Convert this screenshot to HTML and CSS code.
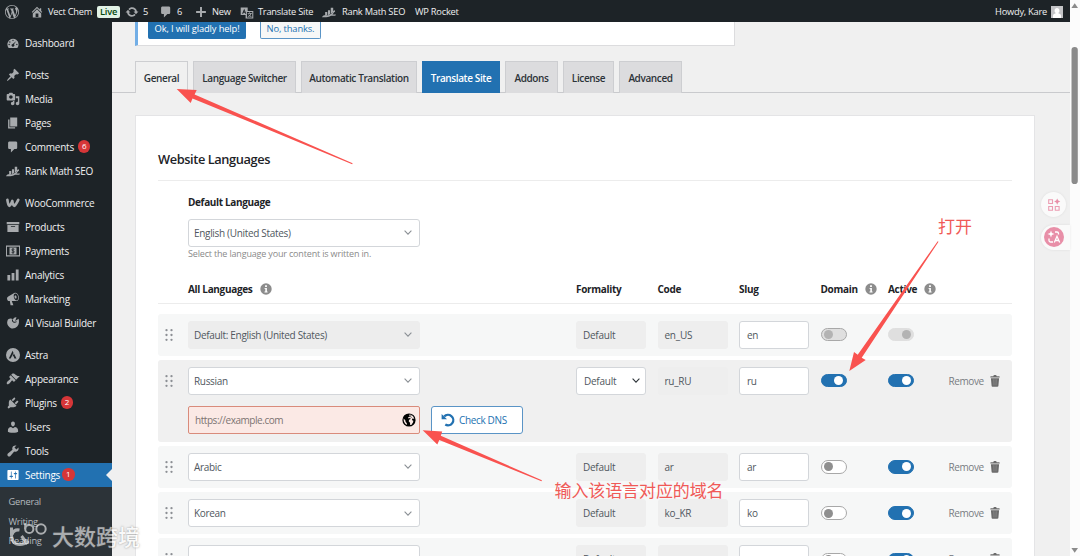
FILE: index.html
```html
<!DOCTYPE html>
<html lang="en">
<head>
  <meta charset="UTF-8">
  <title>Translate Settings</title>
  <link rel="stylesheet" href="styles.css">
</head>
<body>

  <!-- icon definitions -->
  <svg class="defs" width="0" height="0">
    <symbol id="i-wp" viewBox="0 0 20 20"><path d="M20 10c0-5.51-4.49-10-10-10C4.48 0 0 4.49 0 10c0 5.52 4.48 10 10 10 5.51 0 10-4.48 10-10zM7.78 15.37L4.37 6.22c.55-.02 1.17-.08 1.17-.08.5-.06.44-1.13-.06-1.11 0 0-1.45.11-2.37.11-.18 0-.37 0-.58-.01C4.12 2.69 6.87 1.11 10 1.11c2.33 0 4.45.87 6.05 2.34-.68-.11-1.65.39-1.65 1.58 0 .74.45 1.36.9 2.1.35.61.55 1.36.55 2.46 0 1.49-1.4 5-1.4 5l-3.03-8.37c.54-.02.82-.17.82-.17.5-.05.44-1.25-.06-1.22 0 0-1.44.12-2.38.12-.87 0-2.33-.12-2.33-.12-.5-.03-.56 1.2-.06 1.22l.92.08 1.26 3.41zM17.41 10c.24-.64.74-1.87.43-4.25.7 1.29 1.05 2.71 1.05 4.25 0 3.29-1.73 6.24-4.4 7.78.97-2.59 1.94-5.2 2.92-7.78zM6.1 18.09C3.12 16.65 1.11 13.53 1.11 10c0-1.3.23-2.48.72-3.59C3.25 10.3 4.67 14.2 6.1 18.09zm4.03-6.63l2.58 6.98c-.86.29-1.76.45-2.71.45-.79 0-1.57-.11-2.29-.33.81-2.38 1.62-4.74 2.42-7.1z"/></symbol>
    <symbol id="i-home" viewBox="0 0 20 20"><path d="M16 8.5l1.53 1.53-1.06 1.06L10 4.6l-6.47 6.49-1.06-1.06L10 2.5l4 4v-2h2v4zm-6-2.46l6 5.99V18H4v-5.97zM12 17v-5H8v5h4z"/></symbol>
    <symbol id="i-update" viewBox="0 0 20 20"><path d="M10.2 3.28c3.53 0 6.43 2.61 6.92 6h2.08l-3.5 4-3.5-4h2.32c-.45-1.97-2.21-3.45-4.32-3.45-1.45 0-2.73.71-3.54 1.78L4.95 5.66C6.23 4.2 8.11 3.28 10.2 3.28zm-.4 13.44c-3.52 0-6.43-2.61-6.92-6H.8l3.5-4c1.17 1.33 2.33 2.67 3.5 4H5.48c.45 1.97 2.21 3.45 4.32 3.45 1.45 0 2.73-.71 3.54-1.78l1.71 1.95c-1.28 1.46-3.15 2.38-5.25 2.38z"/></symbol>
    <symbol id="i-comment" viewBox="0 0 20 20"><path d="M5 2h9c1.1 0 2 .9 2 2v7c0 1.1-.9 2-2 2h-2l-5 5v-5H5c-1.1 0-2-.9-2-2V4c0-1.1.9-2 2-2z"/></symbol>
    <symbol id="i-plus" viewBox="0 0 20 20"><path d="M17 8.6v2.8h-5.6V17H8.6v-5.6H3V8.6h5.6V3h2.8v5.6z"/></symbol>
    <symbol id="i-translate" viewBox="0 0 20 20"><path fill-rule="evenodd" d="M1 2h10v5h8v11H8v-5H1zM3 11l3-7 3 7H7.5l-.5-1.5H5L4.5 11zM5.500 8h1L6 6.500zM10 8.500v8h7.500v-8z"/><path d="M11 10h2.200V9h1v1H17v1h-1c-.3 1.300-.8 2.100-1.400 2.800.6.5 1.300.9 2.100 1.200l-.5 1c-.9-.4-1.700-.9-2.400-1.500-.7.600-1.400 1.100-2.300 1.500l-.5-1c.8-.3 1.500-.7 2-1.200-.5-.5-.9-1.100-1.200-1.800h1.100c.2.400.5.700.8 1.100.5-.6.9-1.200 1.100-2.100H11z"/></symbol>
    <symbol id="i-rank" viewBox="0 0 20 20"><path d="M4.500 10h3v4.500l-3 1.500zM8.500 7.500h3v5.500l-3 1.500zM12.500 4h3.500v6l-3.500 3z"/><path d="M0 17.500c1.500-2.500 3-3.300 5.500-2.500 5-.5 8.500-2.500 10.500-5.500h-1.500L18 7l.8 3.500-1.300-.5c-.7 1.500-1.500 2.500-2.500 3.500h5l-1 1.700h-6C9.500 17 6 18 0 17.500z"/></symbol>
    <symbol id="i-dash" viewBox="0 0 20 20"><path fill-rule="evenodd" d="M3.760 17h12.480A8 8 0 0 0 18 12a8 8 0 1 0-14.240 5zM10 5.200a1 1 0 1 1 0 2 1 1 0 0 1 0-2zM5.500 7.500a1 1 0 1 1 0 2 1 1 0 0 1 0-2zM4.500 11.200a1 1 0 1 1 0 2 1 1 0 0 1 0-2zM15.500 11.200a1 1 0 1 1 0 2 1 1 0 0 1 0-2zM14.800 7l-3.400 4.900a2 2 0 1 1-1.800-.6z"/></symbol>
    <symbol id="i-pin" viewBox="0 0 20 20"><path d="M10.440 3.020l1.820-1.820 6.360 6.350-1.830 1.820c-1.050-.68-2.480-.57-3.410.36l-.75.75c-.92.93-1.040 2.350-.35 3.410l-1.830 1.820-2.410-2.410-2.800 2.790c-.42.42-3.380 2.710-3.800 2.290s1.860-3.390 2.280-3.810l2.790-2.790L4.100 9.360l1.830-1.820c1.050.69 2.480.57 3.400-.36l.75-.75c.93-.92 1.050-2.350.36-3.410z"/></symbol>
    <symbol id="i-media" viewBox="0 0 20 20"><path d="M13 11V4c0-.55-.45-1-1-1h-1.670L9 1H5L3.670 3H2c-.55 0-1 .45-1 1v7c0 .55.45 1 1 1h10c.55 0 1-.45 1-1zM7 4.500c1.380 0 2.500 1.120 2.500 2.500S8.380 9.500 7 9.500 4.500 8.380 4.500 7 5.620 4.500 7 4.500zM14 6h5v10.500c0 1.380-1.120 2.500-2.500 2.500S14 17.880 14 16.500s1.120-2.500 2.500-2.500c.17 0 .34.020.5.050V9h-3V6zm-4 8.050V13h2v3.500c0 1.380-1.120 2.500-2.500 2.500S7 17.880 7 16.500 8.120 14 9.500 14c.17 0 .34.020.5.050z"/></symbol>
    <symbol id="i-page" viewBox="0 0 20 20"><path d="M6 15V2h10v13H6zm-1 1h8v2H3V5h2v11z"/></symbol>
    <symbol id="i-woo" viewBox="0 0 20 20"><path d="M2 5.500c.5 4 1.500 7.500 2.800 8.500 1.500-.5 3.200-4.500 4.200-7 .3 3.500 1.500 6.500 2.800 7 1.700-.7 3.500-4 5.700-8.500" fill="none" stroke="currentColor" stroke-width="3.800" stroke-linecap="round" stroke-linejoin="round"/></symbol>
    <symbol id="i-box" viewBox="0 0 20 20"><path d="M19 3v3H1V3h18zM2 7h16v10H2V7zm11 3V9H7v1h6z"/></symbol>
    <symbol id="i-pay" viewBox="0 0 20 20"><path d="M.5 3h19v14H.5z" fill="none" stroke="currentColor" stroke-width="1.800"/><path d="M5 5h10v10H5z"/><path d="M12 7.700c-1.400-.8-3.800-.6-3.800.7 0 1.700 3.700 1.100 3.700 2.900 0 1.400-2.500 1.500-3.900.7M10 6v8" fill="none" stroke="#1d2327" stroke-width="1.200"/></symbol>
    <symbol id="i-chart" viewBox="0 0 20 20"><path d="M18 18V2h-4v16h4zm-6 0V7H8v11h4zm-6 0v-8H2v8h4z"/></symbol>
    <symbol id="i-mega" viewBox="0 0 20 20"><path d="M18.150 5.940c.46 1.620.38 3.220-.02 4.480-.42 1.280-1.260 2.180-2.300 2.480-.16.060-.26.060-.4.060-.06.020-.12.020-.18.020-.06.020-.14.020-.22.020h-6.800l2.220 5.500c.02.14-.06.26-.14.34-.08.1-.24.16-.34.16H6.950c-.1 0-.26-.06-.34-.16-.08-.08-.16-.2-.14-.34l-1-5.500H4.250l-.02-.02c-.5.060-1.080-.18-1.540-.62s-.88-1.080-1.060-1.880c-.24-.8-.2-1.560-.02-2.200.18-.62.58-1.080 1.060-1.300l.02-.02 9-5.400c.1-.06.18-.1.24-.16.06-.04.14-.08.24-.12.16-.08.28-.12.5-.18 1.040-.3 2.240.1 3.220.98s1.840 2.240 2.260 3.860zm-2.580 5.980h-.02c.4-.1.740-.34 1.040-.7.58-.7.86-1.760.86-3.040 0-.64-.1-1.300-.28-1.980-.34-1.360-1.020-2.500-1.780-3.240s-1.680-1.100-2.460-.88c-.82.22-1.400.96-1.700 2-.32 1.040-.28 2.360.06 3.720.38 1.360 1 2.500 1.800 3.240.78.74 1.620 1.100 2.480.88zm-2.540-7.080c.22-.04.42-.02.62.04.38.16.76.48 1.020 1s.42 1.200.42 1.780c0 .3-.04.56-.12.8-.18.48-.44.84-.86.94-.34.1-.8-.06-1.140-.4s-.64-.86-.78-1.500c-.18-.62-.12-1.240.02-1.720s.48-.84.82-.94z"/></symbol>
    <symbol id="i-ai" viewBox="0 0 20 20"><path d="M2 7c1-4 6-4 8-2 1-3 4-4 5-3l-2 5 5-3c1 4 1 8-2 11s-8 4-11 1-4-6-3-9z"/><path d="M9 5c0 4 3 5 6 3" fill="none" stroke="#1d2327" stroke-width="1.500"/></symbol>
    <symbol id="i-astra" viewBox="0 0 20 20"><path fill-rule="evenodd" d="M10 0a10 10 0 1 0 0 20 10 10 0 0 0 0-20zM9.500 4L4 15h2.700l4-8zM11.300 8l-1.900 3.700h1.500L12 15h3z"/></symbol>
    <symbol id="i-brush" viewBox="0 0 20 20"><path d="M14.480 11.060L7.410 3.990l1.500-1.500c.5-.56 2.300-.47 3.510.32 1.210.8 1.430 1.280 2.910 2.100 1.180.64 2.450 1.260 4.450.85zm-.71.71L6.700 4.700 4.930 6.470c-.39.39-.39 1.020 0 1.410l1.060 1.060c.39.39.39 1.030 0 1.420-.6.6-1.430 1.110-2.210 1.690-.35.26-.7.53-1.010.84C1.430 14.230.4 16.080 1.400 17.070c.99 1 2.840-.03 4.180-1.360.31-.31.58-.66.85-1.020.57-.78 1.080-1.610 1.690-2.210.39-.39 1.020-.39 1.410 0l1.060 1.060c.39.39 1.020.39 1.410 0z"/></symbol>
    <symbol id="i-plug" viewBox="0 0 20 20"><path d="M13.110 4.360L9.870 7.600 8 5.730l3.240-3.240c.35-.34 1.050-.2 1.560.32.52.51.66 1.210.31 1.550zm-8 1.770l.91-1.120 9.010 9.010-1.190.84c-.71.71-2.630 1.160-3.820 1.160H6.140L4.900 17.260c-.59.59-1.540.59-2.120 0-.59-.58-.59-1.530 0-2.120l1.240-1.240v-3.880c0-1.130.4-3.190 1.090-3.890zm7.260 3.970l3.240-3.240c.34-.35 1.040-.21 1.550.31.52.51.66 1.210.31 1.550l-3.240 3.250z"/></symbol>
    <symbol id="i-user" viewBox="0 0 20 20"><path d="M10 9.250c-2.270 0-2.730-3.440-2.730-3.440C7 4.020 7.820 2 9.970 2c2.160 0 2.980 2.020 2.710 3.810 0 0-.41 3.440-2.680 3.440zm0 2.570L12.720 10c2.390 0 4.520 2.330 4.520 4.530v2.490s-3.650 1.130-7.240 1.130c-3.650 0-7.240-1.130-7.240-1.130v-2.490c0-2.250 1.940-4.480 4.470-4.480z"/></symbol>
    <symbol id="i-tool" viewBox="0 0 20 20"><path d="M16.680 9.770c-1.340 1.340-3.300 1.670-4.950.99l-5.410 6.520c-.99.99-2.590.99-3.580 0s-.99-2.590 0-3.570l6.520-5.420c-.68-1.650-.35-3.610.99-4.950 1.280-1.280 3.120-1.620 4.720-1.060l-2.890 2.890 2.820 2.820 2.860-2.870c.53 1.580.18 3.390-1.080 4.650z"/></symbol>
    <symbol id="i-settings" viewBox="0 0 20 20"><path d="M18 16V4c0-.55-.45-1-1-1H3c-.55 0-1 .45-1 1v12c0 .55.45 1 1 1h14c.55 0 1-.45 1-1zM8 11h1c.55 0 1 .45 1 1s-.45 1-1 1H8v1.500c0 .28-.22.5-.5.5s-.5-.22-.5-.5V13H6c-.55 0-1-.45-1-1s.45-1 1-1h1V5.500c0-.28.22-.5.5-.5s.5.22.5.5V11zm5-2h-1c-.55 0-1-.45-1-1s.45-1 1-1h1V5.500c0-.28.22-.5.5-.5s.5.22.5.5V7h1c.55 0 1 .45 1 1s-.45 1-1 1h-1v5.500c0 .28-.22.5-.5.5s-.5-.22-.5-.5V9z"/></symbol>
    <symbol id="i-down" viewBox="0 0 8 5"><path d="M.6.700L4 4.100 7.400.7" fill="none" stroke="currentColor" stroke-width="1.100"/></symbol>
    <symbol id="i-info" viewBox="0 0 12 12"><circle cx="6" cy="6" r="5.700"/><path d="M5.100 2.300h1.800v1.600H5.100zM4.500 4.900h2.400v3.500h.7v1H4.500v-1h.8V5.800h-.8z" fill="#fff"/></symbol>
    <symbol id="i-drag" viewBox="0 0 8 12"><circle cx="1.500" cy="1.200" r="1.150"/><circle cx="6.500" cy="1.200" r="1.150"/><circle cx="1.500" cy="6" r="1.150"/><circle cx="6.500" cy="6" r="1.150"/><circle cx="1.500" cy="10.800" r="1.150"/><circle cx="6.500" cy="10.800" r="1.150"/></symbol>
    <symbol id="i-trash" viewBox="0 0 10 12"><path d="M3.300 1.200C3.500.3 4 .1 5 .1s1.500.2 1.700 1.100h2.400c.4 0 .6.300.6.600v.7H.3v-.7c0-.3.2-.6.6-.6zM.9 3.200h8.200l-.7 7.600c0 .5-.4.900-.9.900h-5c-.5 0-.9-.4-.9-.9z"/><path d="M3.500 4.300l.3 6M5 4.300v6M6.500 4.300l-.3 6" stroke="#999" stroke-width=".4"/></symbol>
  </svg>

  <div class="adminbar">
    <svg class="ic logo"><use href="#i-wp"/></svg>
    <svg class="ic home"><use href="#i-home"/></svg>
    <span class="site">Vect Chem</span>
    <span class="live">Live</span>
    <svg class="ic upd"><use href="#i-update"/></svg>
    <span class="count">5</span>
    <svg class="ic com"><use href="#i-comment"/></svg>
    <span class="count">6</span>
    <svg class="ic add"><use href="#i-plus"/></svg>
    <span class="new">New</span>
    <svg class="ic trans"><use href="#i-translate"/></svg>
    <span class="tsite">Translate Site</span>
    <svg class="ic rank"><use href="#i-rank"/></svg>
    <span class="rseo">Rank Math SEO</span>
    <span class="rocket">WP Rocket</span>
    <span class="howdy">Howdy, Kare</span>
    <svg class="avatar" viewBox="0 0 12 12"><rect width="12" height="12" fill="#c3c4c7"/><path d="M6 2a2.400 2.600 0 0 1 1.500 4.700v.9c1.400.3 2.500.9 2.500 2.200V12H2V9.800c0-1.300 1.100-1.900 2.500-2.200v-.9A2.400 2.600 0 0 1 6 2z" fill="#fff"/></svg>
  </div>

  <div class="layout">
    <div class="sidebar">
      <ul class="menu">
        <li><svg class="ic"><use href="#i-dash"/></svg>Dashboard</li>
        <li class="gap"><svg class="ic"><use href="#i-pin"/></svg>Posts</li>
        <li><svg class="ic"><use href="#i-media"/></svg>Media</li>
        <li><svg class="ic"><use href="#i-page"/></svg>Pages</li>
        <li><svg class="ic"><use href="#i-comment"/></svg>Comments<span class="badge">6</span></li>
        <li><svg class="ic"><use href="#i-rank"/></svg>Rank Math SEO</li>
        <li class="gap"><svg class="ic"><use href="#i-woo"/></svg>WooCommerce</li>
        <li><svg class="ic"><use href="#i-box"/></svg>Products</li>
        <li><svg class="ic"><use href="#i-pay"/></svg>Payments</li>
        <li><svg class="ic"><use href="#i-chart"/></svg>Analytics</li>
        <li><svg class="ic"><use href="#i-mega"/></svg>Marketing</li>
        <li><svg class="ic"><use href="#i-ai"/></svg>AI Visual Builder</li>
        <li class="gap"><svg class="ic"><use href="#i-astra"/></svg>Astra</li>
        <li><svg class="ic"><use href="#i-brush"/></svg>Appearance</li>
        <li><svg class="ic"><use href="#i-plug"/></svg>Plugins<span class="badge">2</span></li>
        <li><svg class="ic"><use href="#i-user"/></svg>Users</li>
        <li><svg class="ic"><use href="#i-tool"/></svg>Tools</li>
        <li class="current"><svg class="ic"><use href="#i-settings"/></svg>Settings<span class="badge tight">1</span></li>
      </ul>
      <ul class="submenu">
        <li>General</li>
        <li>Writing</li>
        <li>Reading</li>
      </ul>
    </div>

    <div class="content">
      <div class="notice">
        <span class="btn primary">Ok, I will gladly help!</span>
        <span class="btn">No, thanks.</span>
      </div>

      <div class="tabs">
        <span class="tab active w-general">General</span>
        <span class="tab w-switcher">Language Switcher</span>
        <span class="tab w-auto">Automatic Translation</span>
        <span class="tab blue w-site">Translate Site</span>
        <span class="tab w-addons">Addons</span>
        <span class="tab w-license">License</span>
        <span class="tab w-adv">Advanced</span>
      </div>

      <div class="panel">
        <h2>Website Languages</h2>

        <div class="default-lang">
          <label>Default Language</label>
          <div class="select">English (United States)<svg class="down"><use href="#i-down"/></svg></div>
          <p class="hint">Select the language your content is written in.</p>
        </div>

        <div class="grid head">
          <span></span>
          <span>All Languages<svg class="info"><use href="#i-info"/></svg></span>
          <span>Formality</span>
          <span>Code</span>
          <span>Slug</span>
          <span>Domain<svg class="info"><use href="#i-info"/></svg></span>
          <span>Active<svg class="info"><use href="#i-info"/></svg></span>
        </div>

        <div class="row">
          <div class="grid">
            <svg class="drag"><use href="#i-drag"/></svg>
            <div class="select disabled">Default: English (United States)<svg class="down"><use href="#i-down"/></svg></div>
            <div class="field off">Default</div>
            <div class="field off">en_US</div>
            <div class="field">en</div>
            <span class="toggle dim"></span>
            <span class="toggle on dim"></span>
          </div>
        </div>

        <div class="row open">
          <div class="grid">
            <svg class="drag"><use href="#i-drag"/></svg>
            <div class="select">Russian<svg class="down"><use href="#i-down"/></svg></div>
            <div class="field pick">Default<svg class="down dark"><use href="#i-down"/></svg></div>
            <div class="field off">ru_RU</div>
            <div class="field">ru</div>
            <span class="toggle on"></span>
            <span class="toggle on"></span>
            <span class="remove">Remove<svg class="trash"><use href="#i-trash"/></svg></span>
          </div>
          <div class="domain">
            <div class="url">https://example.com
              <svg class="globe" viewBox="0 0 14 14"><circle cx="7" cy="7" r="6.600"/><path d="M7.500 1.500l2.200.6 1.700 1.700.9 2.200-1.100-.6-1.200.3.200 1.600 1.200.5-.4 1.600-1.700 2.500-1.100.2-.2-2.300-1.300-1.500.4-1.500 1.500-.8-.5-1.200-1.300.8-.9-.9 1.300-1zM1.600 5.500l1.700 1.800.4 1.700 1.200 1.200-.2 1.700-1.700-1.300-1.200-2.300z" fill="#fbe9e5"/><path d="M7 3.300l1.500.3 1 1M8.700 1.900l.5 1.200" stroke="#000" stroke-width=".7" fill="none"/></svg>
            </div>
            <div class="check">
              <svg class="reset" viewBox="0 0 14 14"><path d="M3.200 3.600A5.200 5.200 0 1 1 4.300 11.500" fill="none" stroke="currentColor" stroke-width="2.300"/><path d="M.6.900v5.300h5.400z"/></svg>
              Check DNS
            </div>
          </div>
        </div>

        <div class="row">
          <div class="grid">
            <svg class="drag"><use href="#i-drag"/></svg>
            <div class="select">Arabic<svg class="down"><use href="#i-down"/></svg></div>
            <div class="field off">Default</div>
            <div class="field off">ar</div>
            <div class="field">ar</div>
            <span class="toggle"></span>
            <span class="toggle on"></span>
            <span class="remove">Remove<svg class="trash"><use href="#i-trash"/></svg></span>
          </div>
        </div>

        <div class="row">
          <div class="grid">
            <svg class="drag"><use href="#i-drag"/></svg>
            <div class="select">Korean<svg class="down"><use href="#i-down"/></svg></div>
            <div class="field off">Default</div>
            <div class="field off">ko_KR</div>
            <div class="field">ko</div>
            <span class="toggle"></span>
            <span class="toggle on"></span>
            <span class="remove">Remove<svg class="trash"><use href="#i-trash"/></svg></span>
          </div>
        </div>

        <div class="row">
          <div class="grid">
            <svg class="drag"><use href="#i-drag"/></svg>
            <div class="select"><svg class="down"><use href="#i-down"/></svg></div>
            <div class="field off">Default</div>
            <div class="field off"></div>
            <div class="field"></div>
            <span class="toggle"></span>
            <span class="toggle on"></span>
            <span class="remove">Remove<svg class="trash"><use href="#i-trash"/></svg></span>
          </div>
        </div>
      </div>
    </div>
  </div>

  <!-- browser scrollbar -->
  <svg class="scroll" viewBox="0 0 10 556"><path d="M4.700 3.200L8 8H1.400z"/><rect x="1.500" y="47" width="6.300" height="137" rx="3.100"/><path d="M4.700 552.800L8 548H1.400z"/></svg>

  <!-- floating extension buttons -->
  <div class="float grid-btn">
    <svg viewBox="0 0 14 14" width="14" height="14"><path d="M1.700 1.700h3.800v3.800H1.700zM1.700 8.500h3.800v3.800H1.700zM8.300 8.500h3.800v3.800H8.300z" fill="none" stroke="#eb9db2" stroke-width="1.100"/><path d="M10.200.5l1 2.100 2.100 1-2.100 1-1 2.100-1-2.100-2.100-1 2.100-1z" fill="#e88fa8"/></svg>
  </div>
  <div class="float lang-btn">
    <svg viewBox="0 0 20 20" width="20" height="20"><circle cx="10" cy="10" r="10" fill="#e88fa8"/><path d="M7 3.500l.9 2.600 2.600.9-2.600.9L7 10.500l-.9-2.600L3.500 7l2.600-.9z" fill="#fff"/><path d="M11 5h2c1 0 1.500.5 1.500 1.500v1M5 11.500v2c0 1 .5 1.500 1.500 1.500H9M10.300 15.500L13 9.300l2.700 6.200M11.200 13.500h3.600" fill="none" stroke="#fff" stroke-width="1.300"/></svg>
  </div>

  <!-- annotations -->
  <svg class="arrows" viewBox="0 0 1080 556">
    <path d="M176.700 89L196.700 90 194.600 94.400 352.600 163.200 352.200 164.200 192.500 98.500 190.700 103z"/>
    <path d="M422.700 430.300L442.200 431.500 440.800 435.800 541.900 480.300 541.500 481.200 439.300 440 437.300 444.500z"/>
    <path d="M849.300 371L854 352 857.700 354.700 937.700 241.200 938.500 241.700 861.700 357.700 865.700 360z"/>
  </svg>
  <div class="note note-open">打开</div>
  <div class="note note-domain">输入该语言对应的域名</div>

  <div class="watermark">
    <svg viewBox="0 0 38 26" width="38" height="26"><path d="M2.500 5.500V13c0 6 3 9.500 8 9.500 4 0 7-1.500 9-3.500M3 12.500C4 9 7 7.500 10.500 8M12.500 14l6 8" fill="none" stroke="#fff" stroke-width="3"/><path d="M16.200 1v6" fill="none" stroke="#fff" stroke-width="2"/><circle cx="20.300" cy="7" r="4.100" fill="none" stroke="#fff" stroke-width="2"/><circle cx="32" cy="7" r="4.700" fill="none" stroke="#fff" stroke-width="2"/></svg>
    <span>大数跨境</span>
  </div>

</body>
</html>
```
FILE: styles.css
```css
* {
  box-sizing: border-box;
}
body {
  margin: 0;
  width: 1080px;
  height: 556px;
  overflow: hidden;
  position: relative;
  background-color: #f0f0f0;
  font-family: "Open Sans", "Noto Sans", sans-serif;
  font-size: 9.8px;
  letter-spacing: -0.25px;
  color: #3c434a;
}
ul, p, h2 {
  margin: 0;
  padding: 0;
  list-style: none;
}
svg {
  fill: currentColor;
  flex: none;
}
.defs {
  position: absolute;
}

/* top bar */
.adminbar {
  width: 1070px;
  height: 22px;
  padding: 1px 7px 0 5px;
  display: flex;
  align-items: center;
  background-color: #1d2327;
  color: #f0f0f1;
  font-size: 9.3px;
  letter-spacing: -0.25px;
  white-space: nowrap;
}
.ic {
  width: 14px;
  height: 14px;
  color: #a7aaad;
}
.adminbar span {
  flex: none;
}
.home { margin-left: 11px; }
.site { width: 45px; margin-left: 4px; }
.live {
  width: 23px;
  height: 12px;
  margin-left: 4px;
  border-radius: 2px;
  background-color: #e2f2e6;
  color: #00450c;
  font-weight: 600;
  line-height: 12px;
  text-align: center;
}
.upd { margin-left: 5px; }
.count { width: 6px; margin-left: 4px; }
.com { margin-left: 10px; }
.add { margin-left: 11px; }
.new { width: 19px; margin-left: 4px; }
.trans { margin-left: 9px; margin-top: 3px; }
.tsite { width: 54px; margin-left: 4px; }
.rank { margin-left: 10px; }
.rseo { width: 63px; margin-left: 6px; }
.rocket { margin-left: 10px; }
.howdy { margin-left: auto; }
.avatar {
  width: 12px;
  height: 12px;
  margin-left: 4px;
}

.layout {
  display: flex;
  width: 1070px;
  height: 534px;
}

/* left menu */
.sidebar {
  width: 112px;
  flex: none;
  background-color: #1d2327;
  color: #f0f0f1;
}
.menu {
  padding-top: 9px;
}
.menu li {
  height: 24px;
  padding: 0 0 1px 6px;
  display: flex;
  align-items: center;
  font-size: 10px;
  letter-spacing: -0.25px;
  white-space: nowrap;
}
.menu .ic {
  margin-right: 5px;
}
.menu .gap {
  margin-top: 8px;
}
.menu .current {
  background-color: #2271b1;
  color: #fff;
  position: relative;
}
.menu .current .ic {
  color: #fff;
}
.menu .current::after {
  content: "";
  position: absolute;
  right: 0;
  top: 6px;
  border: 6px solid transparent;
  border-left: 0;
  border-right-color: #f0f0f0;
}
.badge {
  width: 12.5px;
  height: 12.5px;
  flex: none;
  margin-left: 4px;
  border-radius: 50%;
  background-color: #d63638;
  color: #fff;
  font-size: 8px;
  letter-spacing: 0;
  line-height: 12.5px;
  text-align: center;
}
.badge.tight {
  margin-left: 2px;
}
.submenu {
  height: 72px;
  padding: 5px 0 0 8.5px;
  background-color: #2c3338;
  color: #b4b9be;
}
.submenu li {
  height: 19.7px;
  line-height: 20px;
  font-size: 9.3px;
}

/* content */
.content {
  flex: 1;
  min-width: 0;
  overflow: hidden;
}
.notice {
  width: 600px;
  height: 24px;
  margin-left: 23px;
  padding-left: 10px;
  display: flex;
  align-items: flex-start;
  gap: 14px;
  background-color: #fff;
  border: 1px solid #dcdcde;
  border-top: 0;
  border-left: 3px solid #72aee6;
}
.btn {
  width: 61px;
  height: 17px;
  border: 1px solid #5a94c6;
  border-top: 0;
  border-radius: 0 0 2px 2px;
  background-color: #f6f7f7;
  color: #2271b1;
  font-size: 9.4px;
  letter-spacing: -0.15px;
  line-height: 14px;
  text-align: center;
  white-space: nowrap;
}
.btn.primary {
  width: 98px;
  border-color: #2271b1;
  background-color: #2271b1;
  color: #fff;
}
.tabs {
  height: 47px;
  padding: 14.5px 0 0 23px;
  display: flex;
  gap: 5px;
  border-bottom: 1px solid #c9cacd;
}
.tab {
  height: 32px;
  flex: none;
  border: 1px solid #cdced1;
  border-bottom: 0;
  background-color: #dcdcde;
  color: #2c3338;
  font-size: 10px;
  font-weight: 600;
  letter-spacing: -0.38px;
  line-height: 32px;
  text-align: center;
  white-space: nowrap;
}
.tab.active {
  background-color: #f0f0f0;
}
.tab.blue {
  background-color: #2271b1;
  border-color: #2271b1;
  color: #fff;
}
.w-general { width: 53px; }
.w-switcher { width: 103px; }
.w-auto { width: 116px; }
.w-site { width: 78px; }
.w-addons { width: 53px; }
.w-license { width: 51px; }
.w-adv { width: 63px; }

.panel {
  width: 900px;
  height: 480px;
  margin: 22px 0 0 23px;
  padding: 0 22.5px 0 22px;
  background-color: #fff;
  border: 1px solid #e4e4e6;
}
h2 {
  height: 65px;
  padding-top: 33.5px;
  border-bottom: 1px solid #ececec;
  color: #1d2327;
  font-size: 12.8px;
  font-weight: 600;
  letter-spacing: -0.4px;
  line-height: 18px;
}
.default-lang {
  height: 93px;
  padding: 12.5px 0 0 30px;
}
label {
  display: block;
  height: 25px;
  color: #1d2327;
  font-size: 10px;
  font-weight: 700;
  letter-spacing: -0.35px;
  line-height: 17px;
}
.select {
  width: 232px;
  height: 28px;
  padding: 0 7px 0 5px;
  display: flex;
  align-items: center;
  justify-content: space-between;
  border: 1px solid #d3d6da;
  border-radius: 3px;
  background-color: #fff;
  color: #50575e;
  font-size: 10px;
  letter-spacing: -0.32px;
}
.select.disabled {
  border-color: #ededed;
  background-color: #ededed;
}
.down {
  width: 8px;
  height: 5px;
  margin-left: auto;
  color: #8a8f94;
}
.down.dark {
  color: #2c3338;
}
.hint {
  color: #8a8a8a;
  font-size: 9px;
  letter-spacing: -0.17px;
  line-height: 14px;
}
.grid {
  display: grid;
  grid-template-columns: 30px 388px 81.5px 81.5px 81.5px 67.5px 60.5px 1fr;
  align-items: center;
}
.head {
  height: 30px;
  border-bottom: 1px solid #ececec;
  margin-bottom: 9.5px;
  color: #1d2327;
  font-size: 10px;
  font-weight: 700;
  letter-spacing: -0.32px;
}
.head span {
  display: flex;
  align-items: center;
}
.info {
  width: 12px;
  height: 12px;
  margin-left: 7px;
  color: #8c8c8c;
}
.row {
  height: 42px;
  margin-bottom: 4.2px;
  padding-top: 7px;
  border-radius: 3px;
  background-color: #f6f7f7;
}
.row.open {
  height: 82px;
  background-color: #f0f0f0;
}
.drag {
  width: 8px;
  height: 12px;
  margin-left: 7px;
  color: #8c8f94;
}
.field {
  width: 70px;
  height: 28px;
  padding-left: 7px;
  display: flex;
  align-items: center;
  border: 1px solid #d3d6da;
  border-radius: 3px;
  background-color: #fff;
  color: #50575e;
  font-size: 10px;
}
.field.off {
  padding-left: 6px;
  border-color: #eeeeee;
  background-color: #eeeeee;
}
.field.pick {
  padding-right: 5px;
}
.toggle {
  width: 26px;
  height: 13.5px;
  padding: 1.3px 2.5px;
  display: flex;
  align-items: center;
  border: 1px solid #a8a8a8;
  border-radius: 7px;
  background-color: #fff;
}
.toggle::before {
  content: "";
  width: 9px;
  height: 9px;
  border-radius: 50%;
  background-color: #8f8f8f;
}
.toggle.on {
  justify-content: flex-end;
  border-color: #2271b1;
  background-color: #2271b1;
}
.toggle.on::before {
  background-color: #fff;
}
.toggle.dim {
  background-color: #dfdfdf;
}
.toggle.on.dim {
  border-color: #dfdfdf;
}
.toggle.dim::before, .toggle.on.dim::before {
  background-color: #b3b3b3;
}
.remove {
  display: flex;
  align-items: center;
  color: #787c82;
  font-size: 10px;
  letter-spacing: -0.4px;
}
.trash {
  width: 10px;
  height: 12px;
  margin-left: 6px;
  color: #6b6b6b;
}
.domain {
  display: flex;
  gap: 11px;
  padding: 11.5px 0 0 30px;
}
.url {
  width: 232px;
  height: 28px;
  padding: 0 3px 0 6px;
  display: flex;
  align-items: center;
  justify-content: space-between;
  border: 1px solid #d98b7b;
  border-radius: 2px;
  background-color: #fbe9e5;
  color: #7b7472;
  font-size: 10px;
  letter-spacing: -0.45px;
}
.globe {
  width: 14px;
  height: 14px;
  color: #000;
}
.check {
  width: 92px;
  height: 28px;
  padding-left: 9px;
  display: flex;
  align-items: center;
  gap: 4px;
  border: 1px solid #5a94c6;
  border-radius: 3px;
  background-color: #fff;
  color: #2271b1;
  font-size: 10px;
  letter-spacing: -0.35px;
}
.reset {
  width: 14px;
  height: 14px;
}

/* things floating over the page */
.scroll {
  position: absolute;
  top: 0;
  right: 0;
  width: 10px;
  height: 556px;
  background-color: #fcfcfc;
  color: #8b8b8b;
}
.float {
  position: absolute;
  display: flex;
  align-items: center;
  background-color: #fafafa;
  box-shadow: 0 0 3px rgba(0, 0, 0, 0.08);
}
.grid-btn {
  left: 1041px;
  top: 192px;
  width: 25px;
  height: 25px;
  justify-content: center;
  border-radius: 50%;
}
.lang-btn {
  left: 1041px;
  top: 224.5px;
  width: 29px;
  height: 25px;
  padding-left: 3px;
  border-radius: 13px 0 0 13px;
}
.arrows {
  position: absolute;
  left: 0;
  top: 0;
  width: 1080px;
  height: 556px;
  color: #f9524f;
}
.note {
  position: absolute;
  color: #f05a57;
  font-family: "Noto Sans CJK SC", sans-serif;
  font-size: 17px;
  letter-spacing: -0.1px;
  line-height: 24px;
  white-space: nowrap;
}
.note-open {
  left: 938px;
  top: 214px;
}
.note-domain {
  left: 554.5px;
  top: 478px;
}
.watermark {
  position: absolute;
  left: 9px;
  top: 521px;
  display: flex;
  align-items: center;
  gap: 5px;
  color: #fff;
  opacity: 0.6;
  font-family: "Noto Sans CJK SC", sans-serif;
  font-size: 22px;
  font-weight: 500;
  letter-spacing: 0;
  line-height: 28px;
  text-shadow: 0 0 2px #555;
}
```
